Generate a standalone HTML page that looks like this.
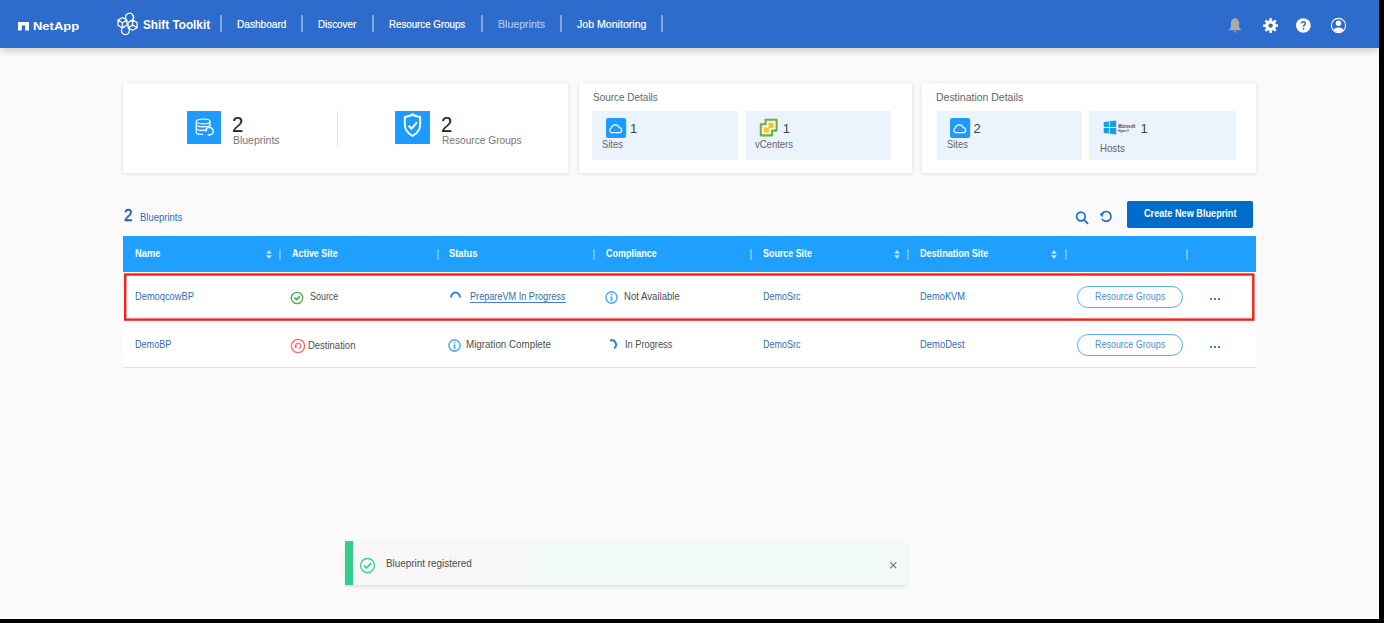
<!DOCTYPE html>
<html><head><meta charset="utf-8">
<style>
*{margin:0;padding:0;box-sizing:border-box}
html,body{width:1384px;height:623px;overflow:hidden;background:#000}
body{font-family:"Liberation Sans",sans-serif;position:relative}
#app{position:absolute;left:0;top:0;width:1379px;height:619px;background:#fafafa;overflow:hidden}
.a{position:absolute}
.t{position:absolute;white-space:nowrap;transform-origin:0 0}
#nav{position:absolute;left:0;top:0;width:1379px;height:48px;background:#2d6bcc;box-shadow:0 2px 8px rgba(0,0,0,.22)}
.sep{position:absolute;width:2px;background:rgba(255,255,255,.4)}
.card{position:absolute;background:#fff;box-shadow:0 1px 4px rgba(0,0,0,.12)}
.box{position:absolute;background:#ebf3fd}
.bsq{position:absolute;background:#1e9bff}
.hsep{position:absolute;width:2px;height:11px;top:249px;background:rgba(255,255,255,.33)}
.pill{position:absolute;width:106px;height:22px;border:1.2px solid #5cb0f7;border-radius:11px;background:#fff}
.dots{position:absolute;width:10px;height:3px}
.dots i{position:absolute;top:0;width:2.2px;height:2.4px;background:#3a7ad6}
</style></head><body>
<div id="app">
<div class="a" style="left:1378px;top:0;width:1px;height:619px;background:#fff"></div><div class="a" style="left:0;top:618px;width:1379px;height:1px;background:#fff"></div>
<div id="nav"></div>
<!-- navbar logo -->
<svg class="a" style="left:18px;top:22px" width="11" height="9" viewBox="0 0 11 9"><path d="M0 0H11V8.4H7.2V3.6H3.8V8.4H0Z" fill="#fff"/></svg>
<svg class="a" style="left:112.5px;top:8.5px" width="30" height="30" viewBox="0 0 30 30" fill="none" stroke="#fff" stroke-width="1.25" stroke-linejoin="round">
<path d="M9.5 8.5L14 11.1V16.3L9.5 18.9L5 16.3V11.1Z M5 11.1L9.5 13.7L14 11.1M9.5 13.7V18.9"/>
<path d="M19.6 10.9L24.1 13.5V18.7L19.6 21.3L15.1 18.7V13.5Z M19.6 10.9V16.1L15.1 18.7M19.6 16.1L24.1 18.7"/>
<path d="M12.8 9.6A4 4 0 1 1 19.6 10.9"/><path d="M9.5 18.9A4 4 0 1 0 15.1 18.7"/>
</svg>
<div class="sep" style="left:220px;top:15px;height:17px"></div>
<div class="sep" style="left:301px;top:15px;height:17px"></div>
<div class="sep" style="left:372px;top:15px;height:17px"></div>
<div class="sep" style="left:481px;top:15px;height:17px"></div>
<div class="sep" style="left:560px;top:15px;height:17px"></div>
<div class="sep" style="left:661px;top:15px;height:17px"></div>
<!-- right icons -->
<svg class="a" style="left:1227px;top:17px" width="16" height="17" viewBox="0 0 16 17"><path d="M8 1C6.8 1.5 4.3 2.4 3.9 5.6V10.2L1.9 12.6V13.3H14.1V12.6L12.1 10.2V5.6C11.7 2.4 9.2 1.5 8 1Z" fill="#acacac"/><path d="M6.6 14.3H9.4A1.4 1.3 0 0 1 6.6 14.3Z" fill="#acacac"/></svg>
<svg class="a" style="left:1263px;top:18px" width="16" height="16" viewBox="0 0 16 16"><g fill="#fff"><circle cx="7.6" cy="7.6" r="5.3"/><g transform="rotate(0 7.6 7.6)"><rect x="6.35" y="0.2" width="2.5" height="3.2"/><rect x="6.35" y="11.8" width="2.5" height="3.2"/></g><g transform="rotate(45 7.6 7.6)"><rect x="6.35" y="0.2" width="2.5" height="3.2"/><rect x="6.35" y="11.8" width="2.5" height="3.2"/></g><g transform="rotate(90 7.6 7.6)"><rect x="6.35" y="0.2" width="2.5" height="3.2"/><rect x="6.35" y="11.8" width="2.5" height="3.2"/></g><g transform="rotate(135 7.6 7.6)"><rect x="6.35" y="0.2" width="2.5" height="3.2"/><rect x="6.35" y="11.8" width="2.5" height="3.2"/></g></g><circle cx="7.6" cy="7.6" r="2.2" fill="#2d6bcc"/></svg>
<svg class="a" style="left:1296.4px;top:18.1px" width="15" height="15" viewBox="0 0 15 15"><circle cx="7.35" cy="7.5" r="7.35" fill="#fff"/><path d="M5.4 5.6C5.4 4.4 6.2 3.7 7.35 3.7S9.3 4.4 9.3 5.5C9.3 6.9 7.5 7.1 7.5 8.8" fill="none" stroke="#2d6bcc" stroke-width="1.5"/><circle cx="7.5" cy="10.75" r="0.9" fill="#2d6bcc"/></svg>
<svg class="a" style="left:1330px;top:17px" width="17" height="17" viewBox="0 0 17 17"><defs><clipPath id="uc"><circle cx="8.5" cy="8.5" r="6.6"/></clipPath></defs><circle cx="8.5" cy="8.5" r="7.1" fill="none" stroke="#fff" stroke-width="1.1"/><g clip-path="url(#uc)" fill="#fff"><circle cx="8.5" cy="6.2" r="2.7"/><ellipse cx="8.5" cy="15.2" rx="6.2" ry="4.6"/></g></svg>

<!-- cards -->
<div class="card" style="left:123px;top:83px;width:445px;height:90px"></div>
<div class="card" style="left:579px;top:83px;width:333px;height:90px"></div>
<div class="card" style="left:922px;top:83px;width:334px;height:90px"></div>
<div class="bsq" style="left:187px;top:110.7px;width:34px;height:33.2px"></div>
<svg class="a" style="left:194px;top:117px" width="21" height="22" viewBox="0 0 21 22" fill="none" stroke="#fff" stroke-width="1.2"><ellipse cx="9.1" cy="4.4" rx="6.9" ry="2.4"/><path d="M2.2 4.4V15.2C2.2 16.5 5.2 17.5 9.1 17.5"/><path d="M16 4.4V11.2"/><path d="M2.2 7.6C2.2 8.9 5.2 9.8 9.1 9.8S16 8.9 16 7.6"/><path d="M2.2 11.2C2.2 12.5 5.2 13.4 9.1 13.4S12.6 13.2 13.2 13"/><path d="M11.9 12.8A3.8 3.8 0 1 1 13.8 17.6" stroke-width="1.3"/><path d="M10.3 12.6L13.2 12.1L11.8 15Z" fill="#fff" stroke="none"/></svg>
<div class="a" style="left:337px;top:111px;width:1px;height:35px;background:#e3e3e3"></div>
<div class="bsq" style="left:395px;top:110.8px;width:34.5px;height:33px"></div>
<svg class="a" style="left:403px;top:113px" width="19" height="25" viewBox="0 0 19 25" fill="none" stroke="#fff" stroke-width="1.9" stroke-linejoin="round"><path d="M9.5 1.3C11 2.7 13.6 3.7 17.2 3.9V11.2C17.2 16.6 13.8 20.6 9.5 22.9C5.2 20.6 1.8 16.6 1.8 11.2V3.9C5.4 3.7 8 2.7 9.5 1.3Z"/><path d="M5.6 12.6L8.5 15.7L14 9.4" stroke-width="2"/></svg>

<div class="box" style="left:592px;top:111px;width:146px;height:49px"></div>
<div class="box" style="left:746px;top:111px;width:145px;height:49px"></div>
<div class="box" style="left:937px;top:111px;width:145px;height:49px"></div>
<div class="box" style="left:1089px;top:111px;width:147px;height:49px"></div>
<svg class="a" style="left:605.6px;top:117.8px" width="21" height="20" viewBox="0 0 21 20"><rect width="20.2" height="20" rx="2.2" fill="#1e9bff"/><path transform="translate(9.8 12) scale(1.15) translate(-9.8 -12)" d="M6.1 14.3H13.6A2.3 2.3 0 0 0 12.8 9.9A3.7 3.7 0 0 0 5.8 10.3A2.1 2.1 0 0 0 6.1 14.3Z" fill="none" stroke="#fff" stroke-width="1.05" stroke-linejoin="round"/></svg>
<svg class="a" style="left:950px;top:117.8px" width="21" height="20" viewBox="0 0 21 20"><rect width="20.2" height="20" rx="2.2" fill="#1e9bff"/><path transform="translate(9.8 12) scale(1.15) translate(-9.8 -12)" d="M6.1 14.3H13.6A2.3 2.3 0 0 0 12.8 9.9A3.7 3.7 0 0 0 5.8 10.3A2.1 2.1 0 0 0 6.1 14.3Z" fill="none" stroke="#fff" stroke-width="1.05" stroke-linejoin="round"/></svg>
<svg class="a" style="left:759px;top:118px" width="20" height="20" viewBox="0 0 20 20"><path d="M6.6 1.8H17.6V12.6H13V17.4H1.8V6.2H6.6Z" fill="#f7f9fd" stroke="#6cb23c" stroke-width="2.1" stroke-linejoin="round"/><rect x="9.5" y="4.8" width="5.1" height="5.1" fill="#f9c31a"/><rect x="4.8" y="9.5" width="5.1" height="5.1" fill="#f9c81f"/></svg>
<svg class="a" style="left:1103px;top:120px" width="34" height="16" viewBox="0 0 34 16"><path d="M0.7 2.1L5.9 1.4V7.1H0.7Z M6.7 1.3L13.2 0.4V7.1H6.7Z M0.7 7.9H5.9V13.6L0.7 12.9Z M6.7 7.9H13.2V14.6L6.7 13.7Z" fill="#12a0ea"/><text x="15.3" y="8.3" font-family="Liberation Sans" font-weight="700" font-size="5.2" fill="#3a3a3a" textLength="17" lengthAdjust="spacingAndGlyphs">Microsoft</text><text x="15.3" y="11.6" font-family="Liberation Sans" font-weight="700" font-size="4" fill="#3c3c3c" textLength="10.5" lengthAdjust="spacingAndGlyphs">Hyper-V</text></svg>

<!-- toolbar -->
<svg class="a" style="left:1075px;top:210.5px" width="14" height="14" viewBox="0 0 14 14" fill="none" stroke="#1a6fce" stroke-width="1.7"><circle cx="5.9" cy="5.5" r="4.3"/><path d="M9 8.7L12.6 12.3" stroke-linecap="round"/></svg>
<svg class="a" style="left:1099px;top:209px" width="14" height="14" viewBox="0 0 14 14" fill="none" stroke="#1a6fce" stroke-width="1.7"><path d="M2.9 9.9A4.9 4.9 0 1 0 3.3 4.3"/><path d="M0.9 5.3L4.4 3.6L3.4 7.7Z" fill="#1a6fce" stroke-width="0.6" stroke-linejoin="round"/></svg>
<div class="a" style="left:1127px;top:201px;width:126px;height:27px;background:#006cc9;border-radius:2px"></div>

<!-- table -->
<div class="a" style="left:123px;top:236px;width:1133px;height:36px;background:#1fa0ff"></div>
<div class="a" style="left:123px;top:272px;width:1133px;height:96px;background:#fff;border-bottom:1px solid #e2e2e2"></div>
<div class="hsep" style="left:279px"></div>
<div class="hsep" style="left:437px"></div>
<div class="hsep" style="left:593px"></div>
<div class="hsep" style="left:750px"></div>
<div class="hsep" style="left:907px"></div>
<div class="hsep" style="left:1065px"></div>
<div class="hsep" style="left:1186px"></div>
<svg class="a" style="left:265px;top:249px" width="8" height="11" viewBox="0 0 8 11" fill="rgba(255,255,255,.7)" stroke="rgba(255,255,255,.7)" stroke-width="0.6" stroke-linejoin="round"><path d="M1.7 4.2L4 1.4L6.3 4.2Z M1.7 6.6L4 9.4L6.3 6.6Z"/></svg>
<svg class="a" style="left:893px;top:249px" width="8" height="11" viewBox="0 0 8 11" fill="rgba(255,255,255,.7)" stroke="rgba(255,255,255,.7)" stroke-width="0.6" stroke-linejoin="round"><path d="M1.7 4.2L4 1.4L6.3 4.2Z M1.7 6.6L4 9.4L6.3 6.6Z"/></svg>
<svg class="a" style="left:1050px;top:249px" width="8" height="11" viewBox="0 0 8 11" fill="rgba(255,255,255,.7)" stroke="rgba(255,255,255,.7)" stroke-width="0.6" stroke-linejoin="round"><path d="M1.7 4.2L4 1.4L6.3 4.2Z M1.7 6.6L4 9.4L6.3 6.6Z"/></svg>
<svg class="a" style="left:123px;top:270px" width="1136" height="54" viewBox="0 0 1136 54"><rect x="2.2" y="4.5" width="1128.1" height="45.1" fill="none" stroke="#ff1c12" stroke-width="2.4"/></svg>

<!-- row1 icons -->
<svg class="a" style="left:290px;top:290.5px" width="14" height="14" viewBox="0 0 14 14" fill="none" stroke="#46b04f" stroke-width="1.3"><circle cx="7" cy="7" r="5.7"/><path d="M4.9 7.1L6.6 8.5L9.4 5.9" stroke-width="1.8" stroke-linecap="round"/></svg>
<svg class="a" style="left:449.6px;top:290.5px" width="12" height="9" viewBox="0 0 12 9" fill="none" stroke="#3883d8" stroke-width="2"><path d="M1.27 6.55A4.3 4.3 0 1 1 9.73 6.55"/></svg>
<div class="a" style="left:469.5px;top:302px;width:96px;height:1.2px;background:#3d82d6"></div>
<svg class="a" style="left:604px;top:290px" width="15" height="15" viewBox="0 0 15 15" fill="none" stroke="#58aef7" stroke-width="1.6"><circle cx="7.5" cy="7.5" r="5.6"/><path d="M7.5 7.3V10.3" stroke-width="1.9" stroke-linecap="round"/><circle cx="7.5" cy="4.6" r="0.95" fill="#58aef7" stroke="none"/></svg>
<div class="pill" style="left:1077px;top:286px"></div>
<div class="dots" style="left:1210px;top:297.5px"><i style="left:0.2px"></i><i style="left:4px"></i><i style="left:7.8px"></i></div>
<!-- row2 icons -->
<svg class="a" style="left:290px;top:338px" width="16" height="16" viewBox="0 0 16 16" fill="none" stroke="#ff6868" stroke-width="1.3"><circle cx="8" cy="8" r="6.6"/><path d="M5.6 8.8A2.7 2.7 0 1 1 8.6 10.6" stroke-width="1.2"/><path d="M4.6 7.6L5.6 9.4L7 8" stroke-width="1.1"/></svg>
<svg class="a" style="left:447px;top:337.6px" width="15" height="15" viewBox="0 0 15 15" fill="none" stroke="#58aef7" stroke-width="1.6"><circle cx="7.5" cy="7.5" r="5.6"/><path d="M7.5 7.3V10.3" stroke-width="1.9" stroke-linecap="round"/><circle cx="7.5" cy="4.6" r="0.95" fill="#58aef7" stroke="none"/></svg>
<svg class="a" style="left:605px;top:339px" width="14" height="12" viewBox="0 0 14 12" fill="none" stroke="#3883d8" stroke-width="2"><path d="M5 1.5A4.5 4.5 0 0 1 9 9.5"/></svg>
<div class="pill" style="left:1077px;top:334px"></div>
<div class="dots" style="left:1210px;top:345.5px"><i style="left:0.2px"></i><i style="left:4px"></i><i style="left:7.8px"></i></div>

<!-- toast -->
<div class="a" style="left:345px;top:541px;width:562px;height:44px;background:linear-gradient(90deg,#f7f7f7 0,#f7f7f7 181px,#f1faf6 183px);box-shadow:0 2px 3px rgba(0,0,0,.10)"></div>
<div class="a" style="left:345px;top:541px;width:8px;height:44px;background:#31cf8f"></div>
<svg class="a" style="left:359px;top:557px" width="17" height="17" viewBox="0 0 17 17" fill="none" stroke="#3ecf95" stroke-width="1.4"><circle cx="8.5" cy="8.5" r="7"/><path d="M4.9 8.4L7.5 11L12.2 6.1" stroke-width="1.7"/></svg>
<svg class="a" style="left:889px;top:561px" width="9" height="9" viewBox="0 0 9 9" stroke="#7c7c7c" stroke-width="1.25"><path d="M1.4 1.4L7.3 7.3M7.3 1.4L1.4 7.3"/></svg>

<div class="t" style="left:33.00px;top:20.20px;font-size:11.6px;line-height:12px;font-weight:700;color:#fff;transform:scaleX(1.1182);">NetApp</div>
<div class="t" style="left:142.50px;top:17.30px;font-size:13.5px;line-height:15px;font-weight:700;color:#fff;transform:scaleX(0.8711);">Shift Toolkit</div>
<div class="t" style="left:237.00px;top:17.90px;font-size:11.6px;line-height:12px;font-weight:400;color:#fff;transform:scaleX(0.8708);-webkit-text-stroke:0.2px #fff;">Dashboard</div>
<div class="t" style="left:318.40px;top:17.90px;font-size:11.6px;line-height:12px;font-weight:400;color:#fff;transform:scaleX(0.8467);-webkit-text-stroke:0.2px #fff;">Discover</div>
<div class="t" style="left:389.00px;top:17.90px;font-size:11.6px;line-height:12px;font-weight:400;color:#fff;transform:scaleX(0.8390);-webkit-text-stroke:0.2px #fff;">Resource Groups</div>
<div class="t" style="left:497.70px;top:17.90px;font-size:11.6px;line-height:12px;font-weight:400;color:#a9c9f2;transform:scaleX(0.9139);-webkit-text-stroke:0.2px #a9c9f2;">Blueprints</div>
<div class="t" style="left:577.20px;top:17.90px;font-size:11.6px;line-height:12px;font-weight:400;color:#fff;transform:scaleX(0.9127);-webkit-text-stroke:0.2px #fff;">Job Monitoring</div>
<div class="t" style="left:232.09px;top:111.80px;font-size:22.5px;line-height:25px;font-weight:400;color:#222;transform:scaleX(0.9091);">2</div>
<div class="t" style="left:233.00px;top:133.70px;font-size:11px;line-height:12px;font-weight:400;color:#777;transform:scaleX(0.9511);">Blueprints</div>
<div class="t" style="left:440.69px;top:111.80px;font-size:22.5px;line-height:25px;font-weight:400;color:#222;transform:scaleX(0.9091);">2</div>
<div class="t" style="left:441.60px;top:133.70px;font-size:11px;line-height:12px;font-weight:400;color:#777;transform:scaleX(0.9227);">Resource Groups</div>
<div class="t" style="left:592.70px;top:90.90px;font-size:11.5px;line-height:12px;font-weight:400;color:#666;transform:scaleX(0.8663);">Source Details</div>
<div class="t" style="left:630.00px;top:121.00px;font-size:13px;line-height:15px;font-weight:400;color:#444;">1</div>
<div class="t" style="left:602.30px;top:137.80px;font-size:10.5px;line-height:12px;font-weight:400;color:#666;transform:scaleX(0.8920);">Sites</div>
<div class="t" style="left:782.70px;top:121.00px;font-size:13px;line-height:15px;font-weight:400;color:#444;">1</div>
<div class="t" style="left:755.00px;top:137.80px;font-size:10.5px;line-height:12px;font-weight:400;color:#666;transform:scaleX(0.9051);">vCenters</div>
<div class="t" style="left:936.40px;top:90.90px;font-size:11.5px;line-height:12px;font-weight:400;color:#666;transform:scaleX(0.9102);">Destination Details</div>
<div class="t" style="left:973.50px;top:121.00px;font-size:13px;line-height:15px;font-weight:400;color:#444;">2</div>
<div class="t" style="left:946.50px;top:137.80px;font-size:10.5px;line-height:12px;font-weight:400;color:#666;transform:scaleX(0.8920);">Sites</div>
<div class="t" style="left:1140.40px;top:121.00px;font-size:13px;line-height:15px;font-weight:400;color:#444;">1</div>
<div class="t" style="left:1100.00px;top:141.50px;font-size:10.5px;line-height:12px;font-weight:400;color:#666;transform:scaleX(0.9214);">Hosts</div>
<div class="t" style="left:124.00px;top:205.80px;font-size:17px;line-height:19px;font-weight:400;color:#1757b3;transform:scaleX(0.8889);-webkit-text-stroke:0.45px #1757b3;">2</div>
<div class="t" style="left:140.00px;top:210.80px;font-size:10.5px;line-height:12px;font-weight:400;color:#2a6bc4;transform:scaleX(0.9044);">Blueprints</div>
<div class="t" style="left:1143.80px;top:207.20px;font-size:10.8px;line-height:12px;font-weight:700;color:#fff;transform:scaleX(0.8467);">Create New Blueprint</div>
<div class="t" style="left:135.00px;top:247.30px;font-size:10.8px;line-height:12px;font-weight:700;color:#fff;transform:scaleX(0.8673);">Name</div>
<div class="t" style="left:291.70px;top:247.30px;font-size:10.8px;line-height:12px;font-weight:700;color:#fff;transform:scaleX(0.8279);">Active Site</div>
<div class="t" style="left:448.70px;top:247.30px;font-size:10.8px;line-height:12px;font-weight:700;color:#fff;transform:scaleX(0.8638);">Status</div>
<div class="t" style="left:605.80px;top:247.30px;font-size:10.8px;line-height:12px;font-weight:700;color:#fff;transform:scaleX(0.8302);">Compliance</div>
<div class="t" style="left:762.80px;top:247.30px;font-size:10.8px;line-height:12px;font-weight:700;color:#fff;transform:scaleX(0.8249);">Source Site</div>
<div class="t" style="left:919.70px;top:247.30px;font-size:10.8px;line-height:12px;font-weight:700;color:#fff;transform:scaleX(0.8384);">Destination Site</div>
<div class="t" style="left:135.00px;top:290.00px;font-size:10.8px;line-height:12px;font-weight:400;color:#2f6dc0;transform:scaleX(0.8606);">DemoqcowBP</div>
<div class="t" style="left:309.50px;top:290.20px;font-size:10.8px;line-height:12px;font-weight:400;color:#4e4e4e;transform:scaleX(0.8274);">Source</div>
<div class="t" style="left:469.50px;top:289.80px;font-size:10.8px;line-height:12px;font-weight:400;color:#2f6dc0;transform:scaleX(0.8456);">PrepareVM In Progress</div>
<div class="t" style="left:623.70px;top:289.90px;font-size:10.8px;line-height:12px;font-weight:400;color:#4e4e4e;transform:scaleX(0.8878);">Not Available</div>
<div class="t" style="left:763.00px;top:289.90px;font-size:10.8px;line-height:12px;font-weight:400;color:#2f6dc0;transform:scaleX(0.8356);">DemoSrc</div>
<div class="t" style="left:919.80px;top:289.90px;font-size:10.8px;line-height:12px;font-weight:400;color:#2f6dc0;transform:scaleX(0.8639);">DemoKVM</div>
<div class="t" style="left:1094.50px;top:289.90px;font-size:10.8px;line-height:12px;font-weight:400;color:#4a8fe0;transform:scaleX(0.8285);">Resource Groups</div>
<div class="t" style="left:134.70px;top:338.20px;font-size:10.8px;line-height:12px;font-weight:400;color:#2f6dc0;transform:scaleX(0.8418);">DemoBP</div>
<div class="t" style="left:308.30px;top:338.50px;font-size:10.8px;line-height:12px;font-weight:400;color:#4e4e4e;transform:scaleX(0.8776);">Destination</div>
<div class="t" style="left:466.30px;top:338.40px;font-size:10.8px;line-height:12px;font-weight:400;color:#4e4e4e;transform:scaleX(0.9080);">Migration Complete</div>
<div class="t" style="left:625.14px;top:337.50px;font-size:10.8px;line-height:12px;font-weight:400;color:#4e4e4e;transform:scaleX(0.8575);">In Progress</div>
<div class="t" style="left:763.00px;top:338.00px;font-size:10.8px;line-height:12px;font-weight:400;color:#2f6dc0;transform:scaleX(0.8356);">DemoSrc</div>
<div class="t" style="left:919.80px;top:338.00px;font-size:10.8px;line-height:12px;font-weight:400;color:#2f6dc0;transform:scaleX(0.8725);">DemoDest</div>
<div class="t" style="left:1094.50px;top:338.00px;font-size:10.8px;line-height:12px;font-weight:400;color:#4a8fe0;transform:scaleX(0.8285);">Resource Groups</div>
<div class="t" style="left:385.50px;top:556.70px;font-size:10.8px;line-height:12px;font-weight:400;color:#4a4a4a;transform:scaleX(0.9165);">Blueprint registered</div>
</div>
</body></html>
